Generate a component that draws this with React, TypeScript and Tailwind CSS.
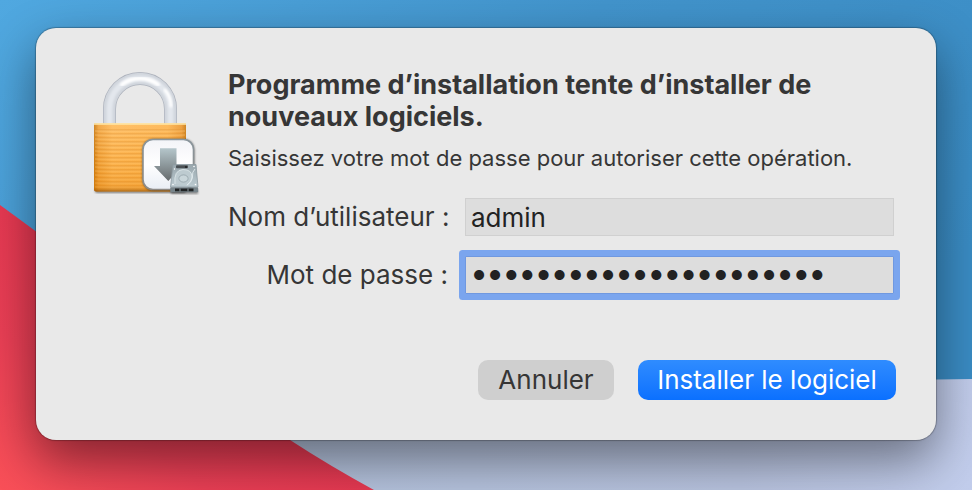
import { useState } from 'react'

const ridges = Array.from({ length: 15 }, (_, i) => 130 + i * 4)

function Wallpaper() {
  return (
    <svg
      className="col-start-1 row-start-1 w-full h-full"
      viewBox="0 0 972 490"
      preserveAspectRatio="xMidYMid slice"
      aria-hidden="true"
    >
      <defs>
        <linearGradient id="sky" x1="0" y1="0" x2="1" y2="0.5">
          <stop offset="0" stopColor="#50a8e0" />
          <stop offset="0.5" stopColor="#4294cc" />
          <stop offset="1" stopColor="#3a8cc4" />
        </linearGradient>
        <linearGradient id="hill" x1="0" y1="0" x2="1" y2="0">
          <stop offset="0" stopColor="#b3c2dc" />
          <stop offset="0.7" stopColor="#b9c4e0" />
          <stop offset="1" stopColor="#c2cdec" />
        </linearGradient>
        <linearGradient id="dune" x1="0" y1="1" x2="0.7" y2="0.3">
          <stop offset="0" stopColor="#f95058" />
          <stop offset="0.4" stopColor="#ea3f55" />
          <stop offset="1" stopColor="#e2334f" />
        </linearGradient>
      </defs>
      <rect width="972" height="490" fill="url(#sky)" />
      <path d="M200 400C450 400 700 382 972 379V490H200Z" fill="url(#hill)" />
      <path d="M0 205C120 290 200 384 290 440Q330 466 374 490H0Z" fill="url(#dune)" />
    </svg>
  )
}

function LockIcon() {
  return (
    <svg width="112" height="128" viewBox="90 70 112 128" aria-hidden="true">
      <defs>
        <linearGradient id="brass" x1="0" y1="0" x2="1" y2="0">
          <stop offset="0" stopColor="#c8780f" />
          <stop offset="0.05" stopColor="#f0a038" />
          <stop offset="0.2" stopColor="#ffb957" />
          <stop offset="0.8" stopColor="#fdb34c" />
          <stop offset="0.95" stopColor="#ec9830" />
          <stop offset="1" stopColor="#c8780f" />
        </linearGradient>
        <linearGradient id="brassShade" x1="0" y1="0" x2="0" y2="1">
          <stop offset="0" stopColor="#fff" stopOpacity="0.1" />
          <stop offset="0.6" stopColor="#e88a10" stopOpacity="0.1" />
          <stop offset="0.93" stopColor="#e07f08" stopOpacity="0.3" />
          <stop offset="1" stopColor="#8a4a00" stopOpacity="0.7" />
        </linearGradient>
        <linearGradient id="tile" x1="0" y1="0" x2="0" y2="1">
          <stop offset="0" stopColor="#f3f4f8" />
          <stop offset="0.5" stopColor="#ffffff" />
          <stop offset="1" stopColor="#e9eef5" />
        </linearGradient>
        <linearGradient id="tileEdge" x1="0" y1="0" x2="0" y2="1">
          <stop offset="0" stopColor="#89959c" />
          <stop offset="1" stopColor="#8d8a86" />
        </linearGradient>
        <linearGradient id="arrow" x1="0" y1="0" x2="0" y2="1">
          <stop offset="0" stopColor="#b5c6cb" />
          <stop offset="1" stopColor="#666b6d" />
        </linearGradient>
        <linearGradient id="disk" x1="0" y1="0" x2="0" y2="1">
          <stop offset="0" stopColor="#98a6ac" />
          <stop offset="1" stopColor="#bccbd1" />
        </linearGradient>
        <filter id="soft" x="-20%" y="-20%" width="140%" height="140%">
          <feGaussianBlur stdDeviation="1" />
        </filter>
      </defs>

      {/* shackle */}
      <path d="M109.500 124V109a30.500 30.500 0 0 1 61 0V124" fill="none" stroke="#adb2bc" strokeWidth="13" />
      <path d="M109.500 124V109a30.500 30.500 0 0 1 61 0V124" fill="none" stroke="#d0d5dc" strokeWidth="11.600" />
      <path d="M109.500 124V109a30.500 30.500 0 0 1 61 0V124" fill="none" stroke="#e3e7ed" strokeWidth="6" filter="url(#soft)" />
      <path d="M122 84.500a30 30 0 0 1 36 0" fill="none" stroke="#fff" strokeWidth="4" strokeLinecap="round" filter="url(#soft)" />
      <path d="M165 90q6 7 6 16" fill="none" stroke="#fff" strokeWidth="3" strokeLinecap="round" filter="url(#soft)" />

      {/* body */}
      <rect x="95" y="188" width="91" height="5" rx="2" fill="#000" opacity="0.45" filter="url(#soft)" />
      <path d="M94 123.500H186V190q0 1.500 -1.500 1.500H96q-2 0 -2 -2Z" fill="url(#brass)" />
      {ridges.map((y) => (
        <g key={y}>
          <path d={`M95 ${y}H185`} stroke="#d9821b" strokeWidth="1" opacity="0.6" />
          <path d={`M95 ${y + 1}H185`} stroke="#ffcd7c" strokeWidth="1" opacity="0.5" />
        </g>
      ))}
      <path d="M94 123.500H186V190q0 1.500 -1.500 1.500H96q-2 0 -2 -2Z" fill="url(#brassShade)" />
      <path d="M94 124H186" stroke="#ffe9a8" strokeWidth="1.500" />

      {/* installer badge */}
      <rect x="142.500" y="139" width="52" height="51.500" rx="10.500" fill="#000" opacity="0.5" filter="url(#soft)" />
      <rect x="143" y="139.500" width="50.500" height="50" rx="10" fill="url(#tile)" stroke="url(#tileEdge)" strokeWidth="1.600" />
      <path d="M160 148.300H176.500V166H182L168.300 181L154 166H160Z" fill="url(#arrow)" />

      {/* hard drive */}
      <rect x="171" y="190" width="27" height="4" fill="#000" opacity="0.4" filter="url(#soft)" />
      <path d="M173 164.500H196L198 187H170.500Z" fill="url(#disk)" stroke="#8d9ba1" strokeWidth="0.800" />
      <path d="M175 184q-1.500 -14 8 -14.500q9 0 9 7.500q0 5 -5 8.500" fill="#bdcbd0" stroke="#dce6e9" strokeWidth="0.900" />
      <ellipse cx="183.500" cy="178.500" rx="4.600" ry="3.600" fill="#c9d6da" stroke="#94a3a9" strokeWidth="0.800" />
      <path d="M195 169q-3 3 -2.500 7t-5.500 9" fill="none" stroke="#e2ebee" strokeWidth="0.900" />
      <rect x="176" y="165.300" width="12" height="3" rx="1" fill="#4a5054" />
      <circle cx="186" cy="167" r="1.100" fill="#1e2122" />
      <g fill="#fff">
        <circle cx="174.500" cy="169" r="0.700" />
        <circle cx="173" cy="184.500" r="0.800" />
        <circle cx="195.500" cy="184.500" r="0.800" />
        <circle cx="194" cy="166.500" r="0.800" />
      </g>
      <rect x="170.200" y="187.200" width="28" height="5" rx="0.800" fill="#77848a" />
      <rect x="175" y="188.500" width="18.500" height="2.800" fill="#202324" />
      <path d="M180 188.500v3M188 188.500v3" stroke="#8c999e" strokeWidth="1" />
    </svg>
  )
}

export default function App() {
  const [user, setUser] = useState('admin')
  const [password, setPassword] = useState('installation-logiciel1')

  return (
    <div className="grid min-h-screen overflow-hidden font-['Inter',sans-serif] text-[#363636]">
      <Wallpaper />

      <main className="col-start-1 row-start-1 px-9 pt-7 pb-12">
        <form
          role="dialog"
          aria-labelledby="dialog-title"
          onSubmit={(e) => e.preventDefault()}
          className="flex flex-col rounded-[20px] bg-[#e9e9e9] pt-[41px] pr-10 pb-10 pl-[54px] shadow-[0_0_1px_1px_rgba(0,0,0,0.25),0_20px_50px_rgba(0,0,0,0.45)]"
        >
          <div className="flex gap-[26px]">
            <div className="shrink-0 pt-px">
              <LockIcon />
            </div>

            <div className="flex-1 min-w-0">
              <h1 id="dialog-title" className="max-w-[600px] text-[27px] leading-8 font-bold">
                Programme d’installation tente d’installer de nouveaux logiciels.
              </h1>
              <p className="mt-[9px] text-[22px] leading-8">
                Saisissez votre mot de passe pour autoriser cette opération.
              </p>

              <div className="mt-6 mr-[2px] grid grid-cols-[220px_1fr] items-center gap-x-[17px] gap-y-5">
                <label htmlFor="user" className="text-right text-[26px] leading-8 whitespace-nowrap">
                  Nom d’utilisateur :
                </label>
                <input
                  id="user"
                  type="text"
                  value={user}
                  onChange={(e) => setUser(e.target.value)}
                  className="h-[38px] w-full min-w-0 border border-[#d0d0d0] bg-[#dddddd] px-[5px] text-[26px] text-[#222222] outline-none"
                />
                <label htmlFor="password" className="text-right text-[26px] leading-8 whitespace-nowrap">
                  Mot de passe :
                </label>
                <input
                  id="password"
                  type="password"
                  value={password}
                  onChange={(e) => setPassword(e.target.value)}
                  className="h-[38px] w-full min-w-0 border border-[#6f98e0] bg-[#dddddd] px-[5px] pb-[6px] text-[32px] leading-8 font-semibold text-[#222222] outline-none rounded-[1px] ring-6 ring-[#7aa5ee]"
                />
              </div>
            </div>
          </div>

          <div className="mt-[66px] flex justify-end gap-6">
            <button type="button" className="h-10 w-[136px] rounded-[10px] bg-[#cfcfcf] text-[26px] leading-8">
              Annuler
            </button>
            <button
              type="submit"
              className="h-10 w-[258px] rounded-[10px] bg-linear-to-b from-[#2f8cff] to-[#0a70ff] text-[26px] leading-8 text-white"
            >
              Installer le logiciel
            </button>
          </div>
        </form>
      </main>
    </div>
  )
}
